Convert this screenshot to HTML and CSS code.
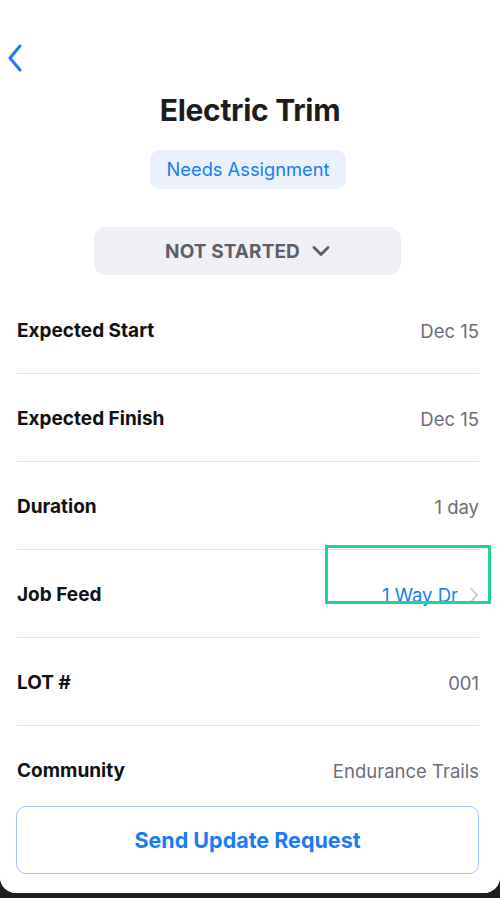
FILE: index.html
```html
<!DOCTYPE html>
<html lang="en">
<head>
<meta charset="utf-8">
<title>Electric Trim</title>
<link rel="stylesheet" href="styles.css">
</head>
<body>
<div class="card">
  <div class="nav">
    <svg class="back" width="16" height="28" viewBox="0 0 16 28"><path d="M13 2 L3 14 L13 26" fill="none" stroke="#1a7cf5" stroke-width="3" stroke-linecap="round" stroke-linejoin="round"/></svg>
  </div>
  <h1 class="title">Electric Trim</h1>
  <div class="badge-wrap"><span class="badge">Needs Assignment</span></div>
  <div class="status-wrap">
    <div class="status">
      <span>NOT STARTED</span>
      <svg width="18" height="12" viewBox="0 0 18 12"><path d="M2 2.5 L9 9.5 L16 2.5" fill="none" stroke="#5d5e66" stroke-width="2.8" stroke-linecap="round" stroke-linejoin="round"/></svg>
    </div>
  </div>
  <div class="list">
    <div class="row"><span class="label">Expected Start</span><span class="value">Dec 15</span></div>
    <div class="row"><span class="label">Expected Finish</span><span class="value">Dec 15</span></div>
    <div class="row"><span class="label">Duration</span><span class="value">1 day</span></div>
    <div class="row"><span class="label">Job Feed</span><span class="value link">1 Way Dr<svg class="chev" width="10" height="16" viewBox="0 0 10 16"><path d="M2 1.5 L8 8 L2 14.5" fill="none" stroke="#c3c3c8" stroke-width="1.6" stroke-linecap="round" stroke-linejoin="round"/></svg></span></div>
    <div class="row"><span class="label">LOT #</span><span class="value">001</span></div>
    <div class="row"><span class="label">Community</span><span class="value">Endurance Trails</span></div>
  </div>
  <div class="footer">
    <button class="send">Send Update Request</button>
  </div>
  <div class="highlight"></div>
</div>
</body>
</html>
```

FILE: styles.css
```css
* { box-sizing: border-box; }
html, body { margin: 0; padding: 0; }
body {
  background: #1e1e1e;
  width: 500px;
  height: 898px;
  overflow: hidden;
  font-family: Inter, "Noto Sans", "Liberation Sans", sans-serif;
}
.card {
  position: relative;
  height: 893px;
  background: #ffffff;
  border-radius: 0 0 16px 16px;
  display: flex;
  flex-direction: column;
  overflow: hidden;
}
.nav {
  height: 93px;
  padding: 44px 0 0 7px;
}
.back { display: block; }
.title {
  margin: 0;
  text-align: center;
  font-size: 30px;
  font-weight: 700;
  line-height: 34px;
  color: #1c1c1e;
  letter-spacing: -0.3px;
}
.badge-wrap {
  display: flex;
  justify-content: center;
  margin-top: 23px;
}
.badge {
  display: inline-block;
  background: #eaf1fd;
  color: #1a7cf5;
  font-size: 18.3px;
  line-height: 39px;
  height: 39px;
  padding: 0 10px;
  border-radius: 10px;
  width: 196px;
  text-align: center;
  margin-left: -4px;
}
.status-wrap {
  display: flex;
  justify-content: center;
  margin-top: 38px;
}
.status {
  width: 307px;
  height: 48px;
  background: #eff0f6;
  border-radius: 12px;
  display: flex;
  align-items: center;
  justify-content: center;
  gap: 12px;
  color: #5d5e66;
  font-size: 19px;
  font-weight: 700;
  letter-spacing: 0.1px;
  margin-left: -5px;
  padding-left: 0;
}
.status svg { display: block; }
.list {
  flex: 1;
  overflow: hidden;
  margin-top: 11px;
  padding: 0 21px 0 17px;
}
.row {
  height: 88px;
  border-bottom: 1px solid #e2e2e6;
  display: flex;
  align-items: center;
  justify-content: space-between;
  padding-top: 2px;
}
.label {
  font-size: 19px;
  font-weight: 700;
  color: #111113;
}
.value {
  font-size: 18.5px;
  color: #6d6d75;
  display: flex;
  align-items: center;
}
.value.link { color: #1a7cf5; }
.chev { margin-left: 11px; display: block; }
.footer {
  flex: none;
  height: 97px;
  padding: 10px 21px 19px 16px;
  background: #ffffff;
}
.send {
  width: 100%;
  height: 68px;
  border: 1px solid #9cc3fb;
  border-radius: 10px;
  background: #ffffff;
  color: #1a7cf5;
  font-family: Inter, "Noto Sans", "Liberation Sans", sans-serif;
  font-size: 21.5px;
  font-weight: 700;
}
.highlight {
  position: absolute;
  left: 325px;
  top: 545px;
  width: 166px;
  height: 59px;
  border: 3px solid #1fd68e;
}
```
